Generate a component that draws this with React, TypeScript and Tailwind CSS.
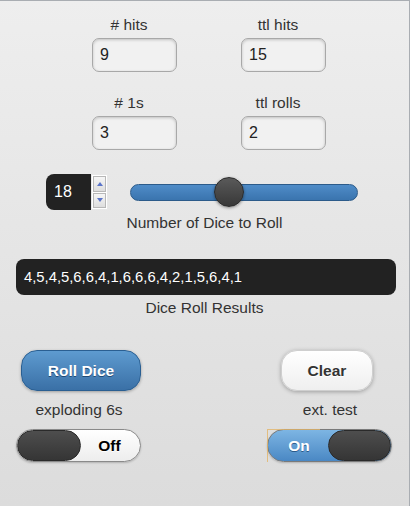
import React from "react";

function StatField({ label, value }: { label: string; value: string }) {
  return (
    <div className="flex flex-col w-[85px]">
      <div className="h-[20px] leading-[20px] text-center pr-[11px] text-[#333]">{label}</div>
      <div className="mt-[3px] h-[34px] rounded-[7px] border border-[#a8a8a8] bg-[#f1f1f1] shadow-[inset_0_1px_3px_rgba(0,0,0,0.2)] flex items-center pl-[7px] text-[16px] text-[#222]">
        {value}
      </div>
    </div>
  );
}

function Toggle({ on }: { on: boolean }) {
  if (on) {
    return (
      <div className="relative w-[125px] h-[33px]">
        <div className="w-full h-full rounded-full border border-[#7a7a7a] overflow-hidden flex bg-linear-to-b from-[#7db5e3] to-[#4a88c4] shadow-[0_1px_2px_rgba(0,0,0,0.2)]">
          <div className="flex-1 flex items-center justify-center pl-[2px] text-white font-bold [text-shadow:0_1px_0_#2a5a8a]">
            On
          </div>
          <div className="w-[63px] h-full rounded-full bg-linear-to-b from-[#4e4e4e] to-[#353535] border border-[#2a2a2a]" />
        </div>
        {/* focus ring leftover */}
        <div className="absolute left-0 top-0 w-[53px] h-[33px] border-l border-t border-[#e2b468]/80 pointer-events-none" />
      </div>
    );
  }
  return (
    <div className="w-[125px] h-[33px] rounded-full border border-[#8a8a8a] overflow-hidden flex bg-linear-to-b from-[#ffffff] to-[#ededed] shadow-[0_1px_2px_rgba(0,0,0,0.2)]">
      <div className="w-[64px] h-full rounded-full bg-linear-to-b from-[#4e4e4e] to-[#353535] border border-[#2a2a2a]" />
      <div className="flex-1 flex items-center justify-center pr-[2px] text-black font-bold [text-shadow:0_1px_0_#fff]">
        Off
      </div>
    </div>
  );
}

export default function App() {
  const results = [4, 5, 4, 5, 6, 6, 4, 1, 6, 6, 6, 4, 2, 1, 5, 6, 4, 1];

  return (
    <div className="w-[411px] h-[506px] font-['Liberation_Sans',Arial,sans-serif] text-[15.5px] overflow-hidden">
      <div className="w-[410px] h-[506px] border-t border-r border-[#a9adb2] bg-linear-to-b from-[#eeeeee] to-[#dcdcdc]">
        {/* counters */}
        <div className="pt-[14px] pl-[92px] flex flex-col">
          <div className="flex gap-[64px]">
            <StatField label="# hits" value="9" />
            <StatField label="ttl hits" value="15" />
          </div>
          <div className="flex gap-[64px] mt-[21px]">
            <StatField label="# 1s" value="3" />
            <StatField label="ttl rolls" value="2" />
          </div>
        </div>

        {/* dice count + slider */}
        <div className="mt-[24px] pl-[46px] flex items-center">
          <div className="w-[62px] h-[36px] flex bg-[#222] rounded-l-[8px] rounded-r-[2px]">
            <div className="flex-1 flex items-center pl-[8px] text-[16px] text-white">18</div>
            <div className="w-[17px] h-full flex flex-col border border-[#e8e8e8] bg-white">
              <div className="flex-1 m-px border border-[#b8b8b8] bg-linear-to-b from-[#f6f6f6] to-[#dedede] flex items-center justify-center">
                <svg width="6" height="4" viewBox="0 0 6 4">
                  <path d="M0 4 L3 0 L6 4 Z" fill="#5a74c8" />
                </svg>
              </div>
              <div className="flex-1 m-px mt-0 border border-[#b8b8b8] bg-linear-to-b from-[#f6f6f6] to-[#dedede] flex items-center justify-center">
                <svg width="6" height="4" viewBox="0 0 6 4">
                  <path d="M0 0 L6 0 L3 4 Z" fill="#5a74c8" />
                </svg>
              </div>
            </div>
          </div>
          <div className="ml-[22px] relative w-[228px] h-[17px] rounded-full border border-[#2c5b8a] bg-linear-to-b from-[#4f8cc8] to-[#3a74ae]">
            <div className="absolute left-[83px] top-[-8px] w-[30px] h-[30px] rounded-full border border-[#2b2b2b] bg-linear-to-b from-[#5a5a5a] to-[#383838] shadow-[0_1px_3px_rgba(0,0,0,0.4)]" />
          </div>
        </div>
        <div className="mt-[3px] h-[20px] leading-[20px] text-center text-[#333]">Number of Dice to Roll</div>

        {/* results */}
        <div className="mt-[26px] ml-[16px] w-[380px] h-[36px] rounded-[8px] bg-[#222] flex items-center px-[8px] text-[14.8px] text-white">
          {results.join(",")}
        </div>
        <div className="mt-[3px] h-[20px] leading-[20px] text-center text-[#333]">Dice Roll Results</div>

        {/* buttons and switches */}
        <div className="mt-[32px] flex">
          <div className="ml-[16px] w-[126px] flex flex-col">
            <button className="ml-[5px] w-[120px] h-[41px] rounded-[16px] border border-[#2a5f92] bg-linear-to-b from-[#5e9bd0] to-[#3a70a6] text-white font-bold [text-shadow:0_1px_0_#1f4a75] shadow-[0_1px_3px_rgba(0,0,0,0.3)]">
              Roll Dice
            </button>
            <div className="mt-[9px] h-[20px] leading-[20px] text-center text-[#333]">exploding 6s</div>
            <div className="mt-[9px]">
              <Toggle on={false} />
            </div>
          </div>
          <div className="ml-[125px] w-[126px] flex flex-col">
            <button className="ml-[14px] w-[92px] h-[41px] rounded-[16px] border border-[#cfcfcf] bg-linear-to-b from-[#ffffff] to-[#efefef] text-[#333] font-bold [text-shadow:0_1px_0_#fff] shadow-[0_1px_4px_rgba(0,0,0,0.3)]">
              Clear
            </button>
            <div className="mt-[9px] h-[20px] leading-[20px] text-center text-[#333]">ext. test</div>
            <div className="mt-[9px]">
              <Toggle on={true} />
            </div>
          </div>
        </div>
      </div>
    </div>
  );
}
